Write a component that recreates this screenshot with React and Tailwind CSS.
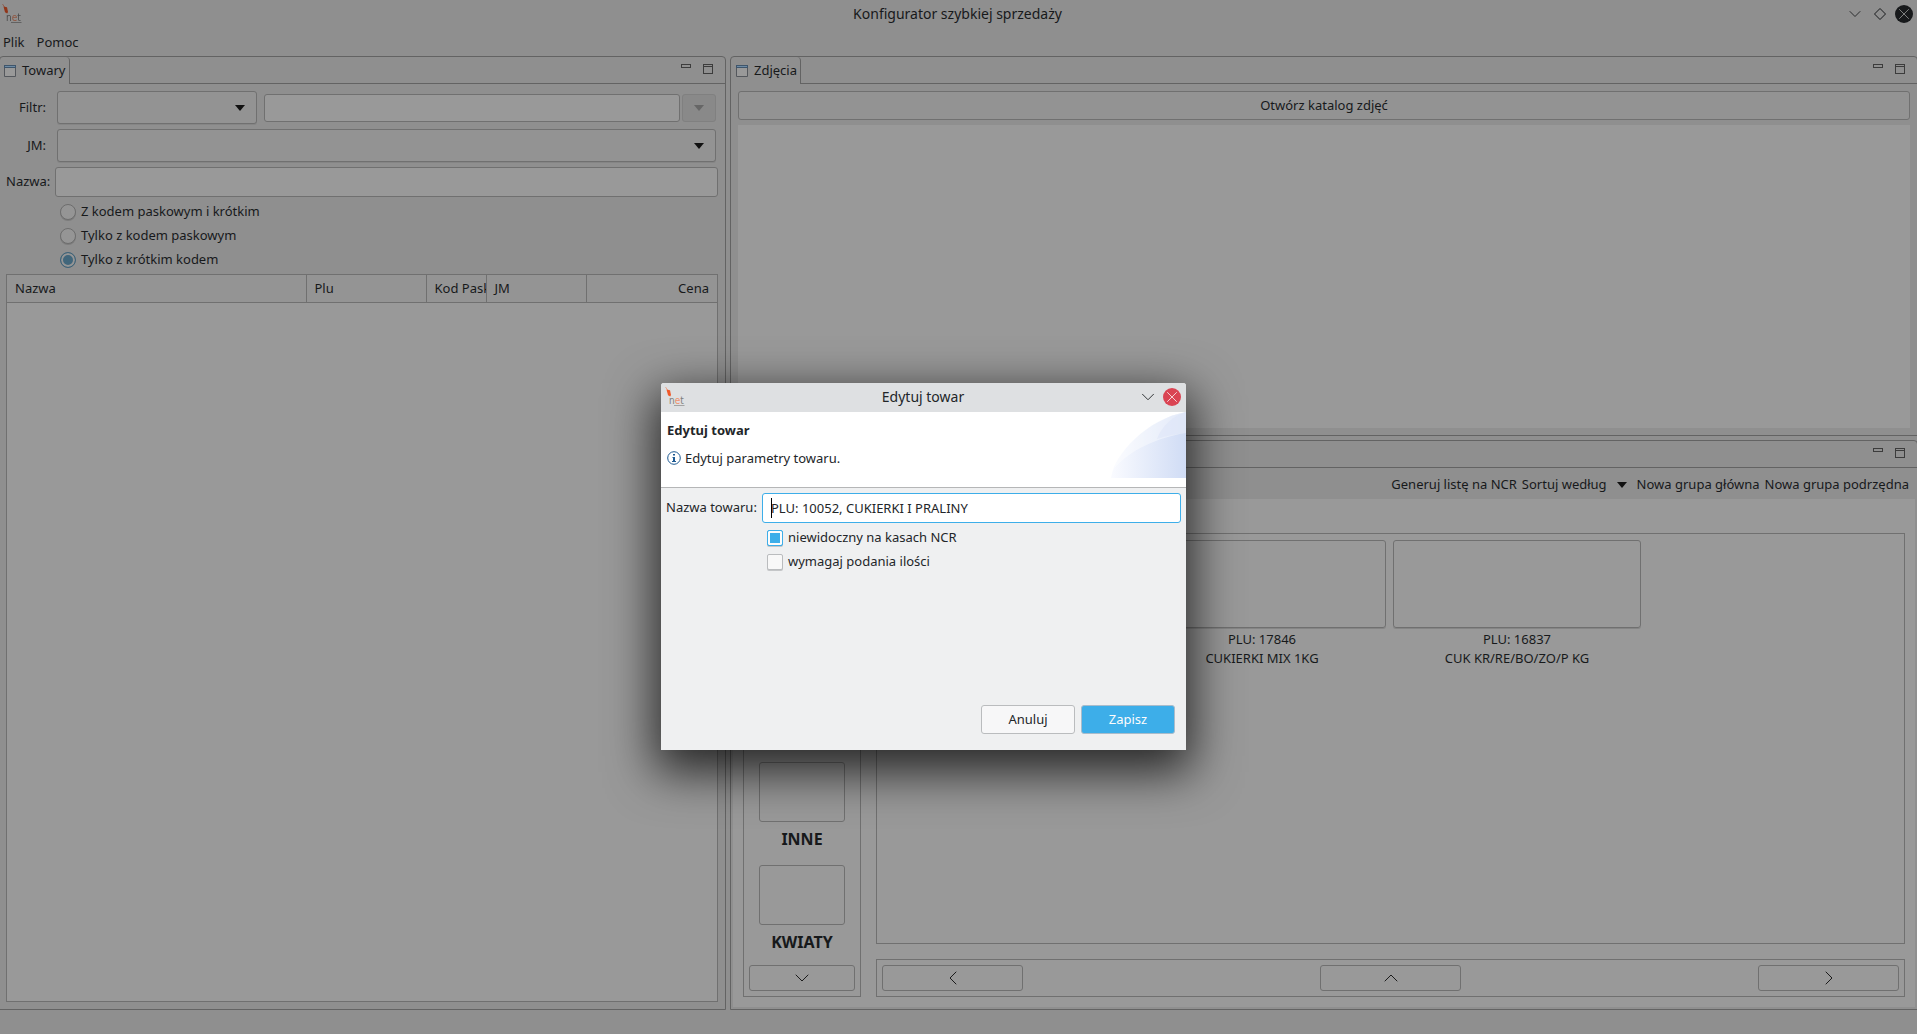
import { ChevronDown, ChevronLeft, ChevronRight, ChevronUp, X } from 'lucide-react';

const FILTER_RADIOS = [
  { id: 'both', label: 'Z kodem paskowym i krótkim' },
  { id: 'barcode', label: 'Tylko z kodem paskowym' },
  { id: 'short', label: 'Tylko z krótkim kodem', checked: true },
];

const CATEGORIES = ['INNE', 'KWIATY'];

const PRODUCTS = [
  { plu: '10052', name: 'CUKIERKI I PRALINY' },
  { plu: '17846', name: 'CUKIERKI MIX 1KG' },
  { plu: '16837', name: 'CUK KR/RE/BO/ZO/P KG' },
];

const Logo = ({ dim }) => (
  <svg viewBox="0 0 20 20" className={`w-5 h-5 ${dim ? 'brightness-60' : ''}`} aria-hidden="true">
    <path d="M.5 0l2 3" stroke="#e9a58d" fill="none" />
    <path d="M1.500 2.500l3.500.8 1 4.700-.8 1.500-2.200-1.200z" fill="#f1592a" />
    <text x="4" y="17" fontSize="10" fontFamily="'DejaVu Sans Condensed', 'Liberation Sans', sans-serif" fill="#7d7d7d">
      n<tspan fill="#f0906c">e</tspan>t
    </text>
    <path d="M9 18.500h10.500" stroke="#a3a3a3" />
  </svg>
);

const Caret = ({ className = '' }) => (
  <svg viewBox="0 0 10 6" className={`w-[10px] h-[6px] ${className}`} aria-hidden="true">
    <path d="M0 0h10L5 6z" fill="currentColor" />
  </svg>
);

const ViewIcon = () => (
  <svg viewBox="0 0 12 12" className="w-3 h-3" aria-hidden="true">
    <path d="M.5.5h11v11H.5z" fill="#999" stroke="#54575c" />
    <path d="M0 0h12v3H0z" fill="#3f556b" />
    <path d="M1 1.500h10" stroke="#6d8ba5" />
  </svg>
);

const ViewButtons = () => (
  <div className="ml-auto flex items-start gap-3 pt-[7px] pr-3">
    <button aria-label="Minimalizuj widok" className="w-[10px] h-1 border border-[#3c3c3c]" />
    <button aria-label="Maksymalizuj widok" className="flex w-[10px] h-[10px] flex-col items-stretch justify-start border border-[#3c3c3c]">
      <span className="h-px mt-px bg-[#3c3c3c]" />
    </button>
  </div>
);

const View = ({ title, tabWidth, className = '', children }) => (
  <section className={`flex flex-col rounded-t border border-[#636363] ${className}`}>
    <div className="flex h-[27px] shrink-0">
      <h2 className={`flex items-center gap-[6px] rounded-tr border-r border-[#636363] ${tabWidth}`}>
        <ViewIcon />
        {title}
      </h2>
      <div className="flex flex-1 border-b border-[#636363]">
        <ViewButtons />
      </div>
    </div>
    {children}
  </section>
);

const Combo = ({ id, className = '' }) => (
  <div className={`relative ${className}`}>
    <select id={id} className="block w-full h-[33px] appearance-none rounded-[3px] border border-[#707070] bg-[#939393] shadow-[0_1px_0_#858585]" />
    <Caret className="absolute right-3 top-[14px] pointer-events-none text-[#111]" />
  </div>
);

const ProductsView = () => (
  <View title="Towary" tabWidth="w-[70px] pl-1" className="w-[727px] -ml-px">
    <div className="flex flex-1 flex-col pt-[7px] pr-[7px] pb-[7px] pl-[6px]">
      <div className="flex items-center">
        <label htmlFor="filter" className="w-11 pr-1 text-right">Filtr:</label>
        <Combo id="filter" className="ml-[7px] w-[200px]" />
        <input aria-label="Wartość filtra" className="ml-[7px] h-7 min-w-0 flex-1 rounded-[3px] border border-[#707070] bg-[#999] px-2" />
        <button disabled aria-label="Rozwiń" className="mr-[2px] ml-[2px] flex h-7 w-[34px] items-center justify-center rounded-[3px] border border-[#808080] bg-[#898989] text-[#666]">
          <Caret />
        </button>
      </div>
      <div className="mt-[5px] flex items-center">
        <label htmlFor="unit" className="w-11 pr-1 text-right">JM:</label>
        <Combo id="unit" className="mr-[2px] ml-[7px] flex-1" />
      </div>
      <div className="mt-[5px] flex items-center">
        <label htmlFor="name" className="w-11 text-right">Nazwa:</label>
        <input id="name" className="ml-[5px] h-[30px] flex-1 rounded-[3px] border border-[#707070] bg-[#999] px-2" />
      </div>
      <div className="mt-[3px] pl-[54px]">
        {FILTER_RADIOS.map((r) => (
          <label key={r.id} className="flex h-6 items-center gap-[5px]">
            <input
              type="radio"
              name="kind"
              defaultChecked={r.checked}
              className="h-4 w-4 appearance-none rounded-full border border-[#6d6d6d] bg-[#959595] shadow-[0_1px_0_#7c7c7c] checked:border-[#3f6378] checked:bg-[#41667b] checked:shadow-[inset_0_0_0_2px_#959595]"
            />
            {r.label}
          </label>
        ))}
      </div>
      <div className="mt-[2px] flex-1 border border-[#707070] bg-[#999]">
        <table className="w-full table-fixed">
          <thead>
            <tr className="h-[27px] border-b border-[#707070] bg-[#949494]">
              <th className="w-[299px] border-r border-[#707070] pl-2 text-left font-normal">Nazwa</th>
              <th className="w-[120px] border-r border-[#707070] pl-2 text-left font-normal">Plu</th>
              <th className="w-[60px] overflow-hidden border-r border-[#707070] pl-2 text-left font-normal whitespace-nowrap">Kod Pask</th>
              <th className="w-[100px] border-r border-[#707070] pl-2 text-left font-normal">JM</th>
              <th className="pr-2 text-right font-normal">Cena</th>
            </tr>
          </thead>
        </table>
      </div>
    </div>
  </View>
);

const PhotosView = () => (
  <View title="Zdjęcia" tabWidth="w-[70px] pl-[5px]" className="h-[380px] shrink-0">
    <div className="flex flex-1 flex-col gap-[5px] p-[7px]">
      <button className="h-[29px] rounded-[3px] border border-[#707070] bg-[#939393]">Otwórz katalog zdjęć</button>
      <div className="flex-1 bg-[#999]" />
    </div>
  </View>
);

const NavButton = ({ label, className, children }) => (
  <button aria-label={label} className={`flex h-[26px] items-center justify-center rounded-[3px] border border-[#707070] text-[#1b1b1b] ${className}`}>
    {children}
  </button>
);

const GroupsView = () => (
  <View tabWidth="w-[70px] pl-[5px]" className="flex-1 min-h-0">
    <div className="flex h-[31px] shrink-0 items-center justify-end gap-[5px] pt-[2px] pr-2">
      <button>Generuj listę na NCR</button>
      <button className="flex items-center gap-[10px]">
        Sortuj według
        <Caret className="mr-[5px] text-[#111]" />
      </button>
      <button>Nowa grupa główna</button>
      <button>Nowa grupa podrzędna</button>
    </div>
    <div className="mx-[2px] mb-[2px] flex min-h-0 flex-1 gap-[15px] bg-[#999] px-[10px] pt-[34px] pb-[10px]">
      <div className="flex w-[118px] flex-col border border-[#707070] px-[5px] pb-[5px]">
        <div className="flex min-h-0 flex-1 flex-col justify-end">
          {CATEGORIES.map((name) => (
            <div key={name} className="flex h-[103px] shrink-0 flex-col items-center">
              <button aria-label={name} className="h-[60px] w-[86px] rounded-[3px] border border-[#707070]" />
              <span className="mt-[5px] text-base font-bold">{name}</span>
            </div>
          ))}
        </div>
        <NavButton label="W dół" className="mt-[-3px]"><ChevronDown size={24} strokeWidth={1} /></NavButton>
      </div>
      <div className="flex min-w-0 flex-1 flex-col gap-[15px]">
        <div className="flex flex-1 items-start gap-[7px] border border-[#707070] px-[6px] pt-[6px]">
          {PRODUCTS.map((p) => (
            <div key={p.plu} className="flex w-[248px] flex-col items-center leading-[19px]">
              <button aria-label={p.name} className="mb-[2px] h-[88px] w-full rounded-[3px] border border-[#707070] shadow-[0_1px_0_#858585]" />
              <span>PLU: {p.plu}</span>
              <span>{p.name}</span>
            </div>
          ))}
        </div>
        <div className="flex justify-between border border-[#707070] p-[5px]">
          <NavButton label="Poprzednia" className="w-[141px]"><ChevronLeft size={24} strokeWidth={1} /></NavButton>
          <NavButton label="W górę" className="w-[141px]"><ChevronUp size={24} strokeWidth={1} /></NavButton>
          <NavButton label="Następna" className="w-[141px]"><ChevronRight size={24} strokeWidth={1} /></NavButton>
        </div>
      </div>
    </div>
  </View>
);

const EditDialog = () => (
  <div role="dialog" aria-label="Edytuj towar" className="absolute top-[383px] left-[661px] flex h-[367px] w-[525px] flex-col rounded-t-[3px] bg-[#eff0f1] text-[#232629] shadow-[0_16px_48px_6px_rgba(0,0,0,0.75)]">
    <div className="flex h-[29px] items-center rounded-t-[3px] bg-[#dee0e2] pr-[5px] pb-px pl-1">
      <div className="w-12"><Logo /></div>
      <div className="flex-1 text-center text-sm">Edytuj towar</div>
      <div className="flex w-12 items-center justify-end gap-1">
        <button aria-label="Zwiń"><ChevronDown size={22} strokeWidth={1} /></button>
        <button aria-label="Zamknij" className="flex h-[18px] w-[18px] items-center justify-center rounded-full bg-[#da4453] text-white">
          <X size={18} strokeWidth={1} />
        </button>
      </div>
    </div>
    <div className="flex h-[76px] justify-between border-b border-[#b5b6b7] bg-white">
      <div className="pt-2 pl-[6px]">
        <h1 className="leading-5 font-bold">Edytuj towar</h1>
        <p className="mt-2 flex items-center gap-1 leading-5">
          <svg viewBox="0 0 14 14" className="h-[14px] w-[14px]" aria-hidden="true">
            <circle cx="7" cy="7" r="6.3" fill="#fff" stroke="#1d5a93" />
            <path d="M6 3h2v1.500H6zM5.500 6H8v4h1v1H5v-1h1V7h-.5z" fill="#1d5a93" />
          </svg>
          Edytuj parametry towaru.
        </p>
      </div>
      <svg viewBox="0 0 75 66" className="h-[66px] w-[75px]" aria-hidden="true">
        <defs>
          <linearGradient id="sweep">
            <stop offset="0" stopColor="#fafbff" />
            <stop offset="1" stopColor="#d0dcf5" />
          </linearGradient>
        </defs>
        <path d="M0 66C3 42 36 7 75 0v66z" fill="url(#sweep)" />
        <path d="M3 57C18 38 48 25 75 21V0C36 7 8 38 3 57z" fill="#fff" opacity=".4" />
        <path d="M46 27C51 14 62 4 75 0v21Q60 22 46 27z" fill="#dbe4f8" opacity=".5" />
      </svg>
    </div>
    <div className="flex-1 px-[5px] pt-[5px]">
      <div className="flex items-center">
        <label htmlFor="item-name" className="w-24">Nazwa towaru:</label>
        <div className="relative flex-1">
          <input id="item-name" defaultValue="PLU: 10052, CUKIERKI I PRALINY" className="block h-[30px] w-full rounded-[3px] border border-[#3daee9] bg-white px-2 outline-none" />
          <span className="absolute top-[5px] left-[9px] h-5 w-px bg-black" />
        </div>
      </div>
      <div className="mt-[3px] pl-[101px]">
        <label className="flex h-6 items-center gap-[5px]">
          <input type="checkbox" defaultChecked className="h-4 w-4 appearance-none rounded-[2px] border border-[#3daee9] bg-[#3daee9] shadow-[inset_0_0_0_2px_#fcfcfc,0_1px_0_#c4c6c8]" />
          niewidoczny na kasach NCR
        </label>
        <label className="flex h-6 items-center gap-[5px]">
          <input type="checkbox" className="h-4 w-4 appearance-none rounded-[2px] border border-[#babcbe] bg-[#f8f8f8] shadow-[0_1px_0_#c4c6c8]" />
          wymagaj podania ilości
        </label>
      </div>
    </div>
    <div className="flex justify-end gap-[6px] pr-[11px] pb-4">
      <button className="h-[29px] w-[94px] rounded-[3px] border border-[#babcbe] bg-[#f7f7f8]">Anuluj</button>
      <button className="h-[29px] w-[94px] rounded-[3px] border border-[#a9bccb] bg-[#3daee9] text-[#fcfcfc]">Zapisz</button>
    </div>
  </div>
);

export default function App() {
  return (
    <div className="relative flex h-screen flex-col overflow-hidden bg-[#8f8f8f] font-['Noto_Sans',sans-serif] text-[13px] text-[#17191b]">
      <header className="flex h-7 shrink-0 items-center pr-1 pl-[2px]">
        <div className="w-20"><Logo dim /></div>
        <div className="flex-1 text-center text-sm">Konfigurator szybkiej sprzedaży</div>
        <div className="flex w-20 items-center justify-end gap-[5px]">
          <button aria-label="Minimalizuj"><ChevronDown size={20} strokeWidth={1} /></button>
          <button aria-label="Przywróć">
            <svg viewBox="0 0 20 20" className="h-5 w-5"><path d="M10 4.500l5.500 5.500-5.500 5.500-5.500-5.500z" fill="none" stroke="currentColor" /></svg>
          </button>
          <button aria-label="Zamknij" className="flex h-[18px] w-[18px] items-center justify-center rounded-full bg-[#17191b] text-[#a0a0a0]">
            <X size={18} strokeWidth={1} />
          </button>
        </div>
      </header>
      <nav className="flex h-7 shrink-0 items-center gap-3 pt-[2px] pl-[3px]">
        <button>Plik</button>
        <button>Pomoc</button>
      </nav>
      <main className="flex min-h-0 flex-1 gap-1">
        <ProductsView />
        <div className="-mr-px flex min-w-0 flex-1 flex-col gap-1">
          <PhotosView />
          <GroupsView />
        </div>
      </main>
      <footer className="h-6 shrink-0" />
      <EditDialog />
    </div>
  );
}
